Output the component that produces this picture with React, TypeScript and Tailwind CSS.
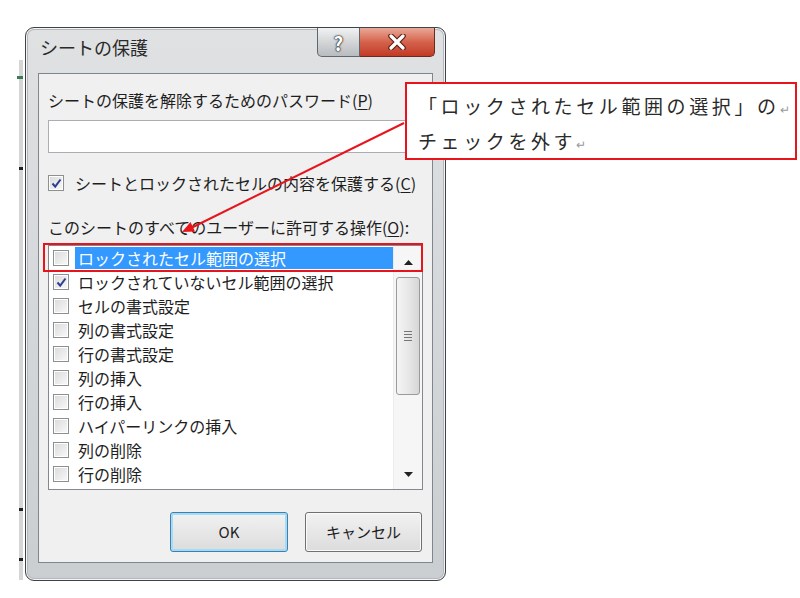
import React from "react";

const items = [
  { label: "ロックされたセル範囲の選択", checked: false, selected: true },
  { label: "ロックされていないセル範囲の選択", checked: true },
  { label: "セルの書式設定", checked: false },
  { label: "列の書式設定", checked: false },
  { label: "行の書式設定", checked: false },
  { label: "列の挿入", checked: false },
  { label: "行の挿入", checked: false },
  { label: "ハイパーリンクの挿入", checked: false },
  { label: "列の削除", checked: false },
  { label: "行の削除", checked: false },
];

function CheckBox({ checked }: { checked?: boolean }) {
  return (
    <div className="w-[16px] h-[16px] shrink-0 border border-[#8e8f8f] bg-white p-[1px]">
      <div className="w-full h-full bg-gradient-to-br from-[#dcdcdc] to-[#f7f7f7] flex items-center justify-center">
        {checked && (
          <svg width="11" height="11" viewBox="0 0 11 11">
            <path d="M1.5 5.5 L4.2 8.6 L9.5 1.5" fill="none" stroke="#2b3f8f" strokeWidth="2" />
          </svg>
        )}
      </div>
    </div>
  );
}

function Mn({ c }: { c: string }) {
  return (
    <>
      (<span className="underline underline-offset-2">{c}</span>)
    </>
  );
}

export default function App() {
  return (
    <div className="relative w-[800px] h-[598px] bg-white overflow-hidden font-['Noto_Sans_CJK_JP','Liberation_Sans',sans-serif] text-[#1e1e1e]">
      <div className="flex items-start">
        {/* spreadsheet edge behind the dialog */}
        <div className="ml-[19px] mt-[60px] w-[4px] h-[520px] bg-[#d6d6d6] flex flex-col">
          <div className="mt-[16px] h-[3px] w-[6px] -ml-[2px] bg-[#3d7a55]" />
          <div className="mt-[88px] h-[3px] w-[4px] bg-[#222]" />
          <div className="mt-[338px] h-[3px] w-[4px] bg-[#222]" />
          <div className="mt-[47px] h-[3px] w-[4px] bg-[#222]" />
        </div>

        {/* dialog */}
        <div className="ml-[2px] mt-[27px] w-[421px] h-[554px] rounded-[9px] border border-[#3f4448] bg-gradient-to-b from-[#dfe1e3] to-[#cbced1] shadow-[inset_0_0_0_1px_#f3f4f5,inset_0_0_0_2px_#b4b8bc] flex flex-col px-[12px] pb-[17px]">
          <div className="h-[45px] flex items-start justify-between">
            <div className="pt-[6px] ml-[2px] text-[18px] leading-[26px] text-[#2a2a2a]">シートの保護</div>
            <div className="flex -mr-[2px]">
              <div className="w-[43px] h-[29px] border border-t-0 border-[#5f666d] rounded-bl-[5px] bg-gradient-to-b from-[#f1f2f3] via-[#d3d5d7] to-[#b9bcbf] flex items-center justify-center text-white font-bold text-[19px] leading-none [text-shadow:0_0_1px_#222,0_0_2px_#222,0_0_2px_#444]">
                ?
              </div>
              <div className="w-[75px] h-[29px] border border-t-0 border-l-0 border-[#6b2a20] rounded-br-[5px] bg-gradient-to-b from-[#eaa898] via-[#d4624c] to-[#c23a24] flex items-center justify-center">
                <svg width="20" height="16" viewBox="0 0 20 16">
                  <path d="M4 2 L16 14 M16 2 L4 14" stroke="#5a1f16" strokeWidth="5.5" strokeLinecap="round" />
                  <path d="M4 2 L16 14 M16 2 L4 14" stroke="#ffffff" strokeWidth="3.2" strokeLinecap="round" />
                </svg>
              </div>
            </div>
          </div>

          <div className="flex-1 border border-[#7f868c] bg-[#f0f0f0] pl-[9px] pt-[15px] flex flex-col text-[16px] leading-[22px]">
            <div>
              シートの保護を解除するためのパスワード<Mn c="P" />
            </div>
            <div className="mt-[9px] w-[375px] h-[33px] border border-[#abadb3] bg-white" />
            <div className="mt-[19px] flex items-center gap-[11px]">
              <CheckBox checked />
              <div>
                シートとロックされたセルの内容を保護する<Mn c="C" />
              </div>
            </div>
            <div className="mt-[22px]">
              このシートのすべてのユーザーに許可する操作<Mn c="O" />:
            </div>
            <div className="mt-[7px] w-[375px] h-[245px] border border-[#828790] bg-white flex">
              <div className="flex-1 flex flex-col">
                {items.map((it) => (
                  <div key={it.label} className="h-[24px] flex items-center pl-[4px]">
                    <CheckBox checked={it.checked} />
                    <div
                      className={
                        it.selected
                          ? "ml-[6px] px-[3px] flex-1 h-[22px] bg-[#3399ff] text-white"
                          : "ml-[6px] px-[3px] flex-1 h-[22px]"
                      }
                    >
                      {it.label}
                    </div>
                  </div>
                ))}
              </div>
              <div className="w-[29px] bg-[#f6f6f6] border-l border-[#ebebeb] flex flex-col">
                <div className="h-[28px] flex items-center justify-center pt-[4px]">
                  <svg width="9" height="5" viewBox="0 0 9 5">
                    <path d="M0 5 L4.5 0 L9 5 Z" fill="#222" />
                  </svg>
                </div>
                <div className="ml-[2px] mt-[3px] w-[24px] h-[118px] rounded-[3px] border border-[#9a9a9a] bg-gradient-to-r from-[#f4f4f4] via-[#e8e8e8] to-[#d6d6d6] flex flex-col items-center justify-center gap-[2px]">
                  <div className="w-[8px] h-[1px] bg-[#777]" />
                  <div className="w-[8px] h-[1px] bg-[#777]" />
                  <div className="w-[8px] h-[1px] bg-[#777]" />
                  <div className="w-[8px] h-[1px] bg-[#777]" />
                </div>
                <div className="flex-1" />
                <div className="h-[28px] flex items-center justify-center pb-[2px]">
                  <svg width="9" height="5" viewBox="0 0 9 5">
                    <path d="M0 0 L4.5 5 L9 0 Z" fill="#222" />
                  </svg>
                </div>
              </div>
            </div>
            <div className="mt-[22px] flex justify-end gap-[17px] pr-[10px] text-[15px]">
              <div className="w-[118px] h-[40px] rounded-[3px] border border-[#3c7fb1] shadow-[inset_0_0_0_2px_#a6dcf3] bg-gradient-to-b from-[#f2f2f2] to-[#dcdcdc] flex items-center justify-center">
                OK
              </div>
              <div className="w-[117px] h-[40px] rounded-[3px] border border-[#707070] shadow-[inset_0_0_0_1px_#fafafa] bg-gradient-to-b from-[#f2f2f2] to-[#dcdcdc] flex items-center justify-center">
                キャンセル
              </div>
            </div>
          </div>
        </div>
      </div>

      {/* red highlight around the first list row */}
      <div className="absolute left-[43px] top-[243px] w-[380px] h-[29px] border-2 border-[#e8141c]" />

      {/* callout */}
      <div className="absolute left-[405px] top-[82px] w-[392px] h-[78px] border-2 border-[#e8141c] bg-white pl-[11px] pt-[6px] text-[19px] leading-[32px] tracking-[3.6px] text-[#2a2a2a]">
        <div>
          「ロックされたセル範囲の選択」の<span className="text-[12px] text-[#9a9a9a] tracking-normal">↵</span>
        </div>
        <div>
          チェックを外す<span className="text-[12px] text-[#9a9a9a] tracking-normal">↵</span>
        </div>
      </div>

      {/* arrow */}
      <svg className="absolute left-0 top-0 pointer-events-none" width="800" height="598" viewBox="0 0 800 598">
        <line x1="404" y1="123" x2="191" y2="228" stroke="#e8141c" strokeWidth="2" />
        <polygon points="182,232 195,231.5 190.5,222" fill="#e8141c" />
      </svg>
    </div>
  );
}
